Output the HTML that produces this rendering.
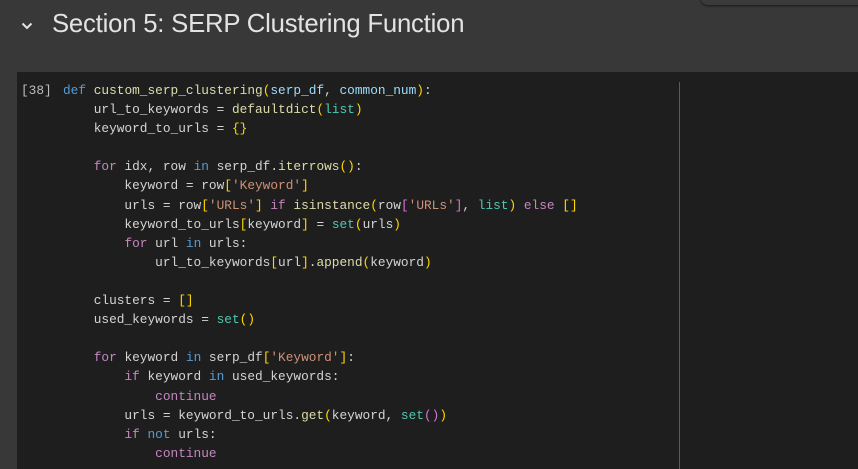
<!DOCTYPE html>
<html><head><meta charset="utf-8"><style>
html,body{margin:0;padding:0;}
body{width:858px;height:469px;background:#383838;position:relative;overflow:hidden;font-family:"Liberation Sans",sans-serif;}
.tab{position:absolute;left:700px;top:-10px;width:170px;height:15px;border-radius:0 0 0 8px;background:#3a3a3a;box-shadow:0 1px 2px rgba(0,0,0,.6);}
.title{position:absolute;left:52px;top:10px;font-size:25.7px;color:#e3e3e3;white-space:nowrap;letter-spacing:-0.2px;}
.cell{position:absolute;left:17px;top:72px;right:0;bottom:0;background:#1e1e1e;}
.vl{position:absolute;left:679px;top:82px;width:1px;bottom:0;background:#5a5a5a;}
pre{position:absolute;left:63px;top:81px;margin:0;font-family:"Liberation Mono",monospace;font-size:12.8px;line-height:19.1px;color:#d4d4d4;}
.num{position:absolute;left:21px;top:81px;font-family:"Liberation Mono",monospace;font-size:12.8px;line-height:19.1px;color:#bdbdbd;}
.k{color:#569cd6}.f{color:#dcdcaa}.p{color:#9cdcfe}.y{color:#ffd700}.m{color:#da70d6}.t{color:#4ec9b0}.s{color:#ce9178}.c{color:#c586c0}
</style></head><body>
<div class="tab"></div>
<svg style="position:absolute;left:20px;top:20px" width="14" height="12" viewBox="0 0 14 12"><path d="M2.5 3.5 L7 8 L11.5 3.5" stroke="#e3e3e3" stroke-width="2" fill="none"/></svg>
<div class="title">Section 5: SERP Clustering Function</div>
<div class="cell"></div>
<div class="vl"></div>
<div class="num">[38]</div>
<pre><span class="k">def</span> <span class="f">custom_serp_clustering</span><span class="y">(</span><span class="p">serp_df</span>, <span class="p">common_num</span><span class="y">)</span>:
    url_to_keywords = <span class="f">defaultdict</span><span class="y">(</span><span class="t">list</span><span class="y">)</span>
    keyword_to_urls = <span class="y">{}</span>

    <span class="c">for</span> idx, row <span class="k">in</span> serp_df.<span class="f">iterrows</span><span class="y">()</span>:
        keyword = row<span class="y">[</span><span class="s">'Keyword'</span><span class="y">]</span>
        urls = row<span class="y">[</span><span class="s">'URLs'</span><span class="y">]</span> <span class="c">if</span> <span class="f">isinstance</span><span class="y">(</span>row<span class="m">[</span><span class="s">'URLs'</span><span class="m">]</span>, <span class="t">list</span><span class="y">)</span> <span class="c">else</span> <span class="y">[]</span>
        keyword_to_urls<span class="y">[</span>keyword<span class="y">]</span> = <span class="t">set</span><span class="y">(</span>urls<span class="y">)</span>
        <span class="c">for</span> url <span class="k">in</span> urls:
            url_to_keywords<span class="y">[</span>url<span class="y">]</span>.<span class="f">append</span><span class="y">(</span>keyword<span class="y">)</span>

    clusters = <span class="y">[]</span>
    used_keywords = <span class="t">set</span><span class="y">()</span>

    <span class="c">for</span> keyword <span class="k">in</span> serp_df<span class="y">[</span><span class="s">'Keyword'</span><span class="y">]</span>:
        <span class="c">if</span> keyword <span class="k">in</span> used_keywords:
            <span class="c">continue</span>
        urls = keyword_to_urls.<span class="f">get</span><span class="y">(</span>keyword, <span class="t">set</span><span class="m">()</span><span class="y">)</span>
        <span class="c">if</span> <span class="k">not</span> urls:
            <span class="c">continue</span>
</pre>
</body></html>
